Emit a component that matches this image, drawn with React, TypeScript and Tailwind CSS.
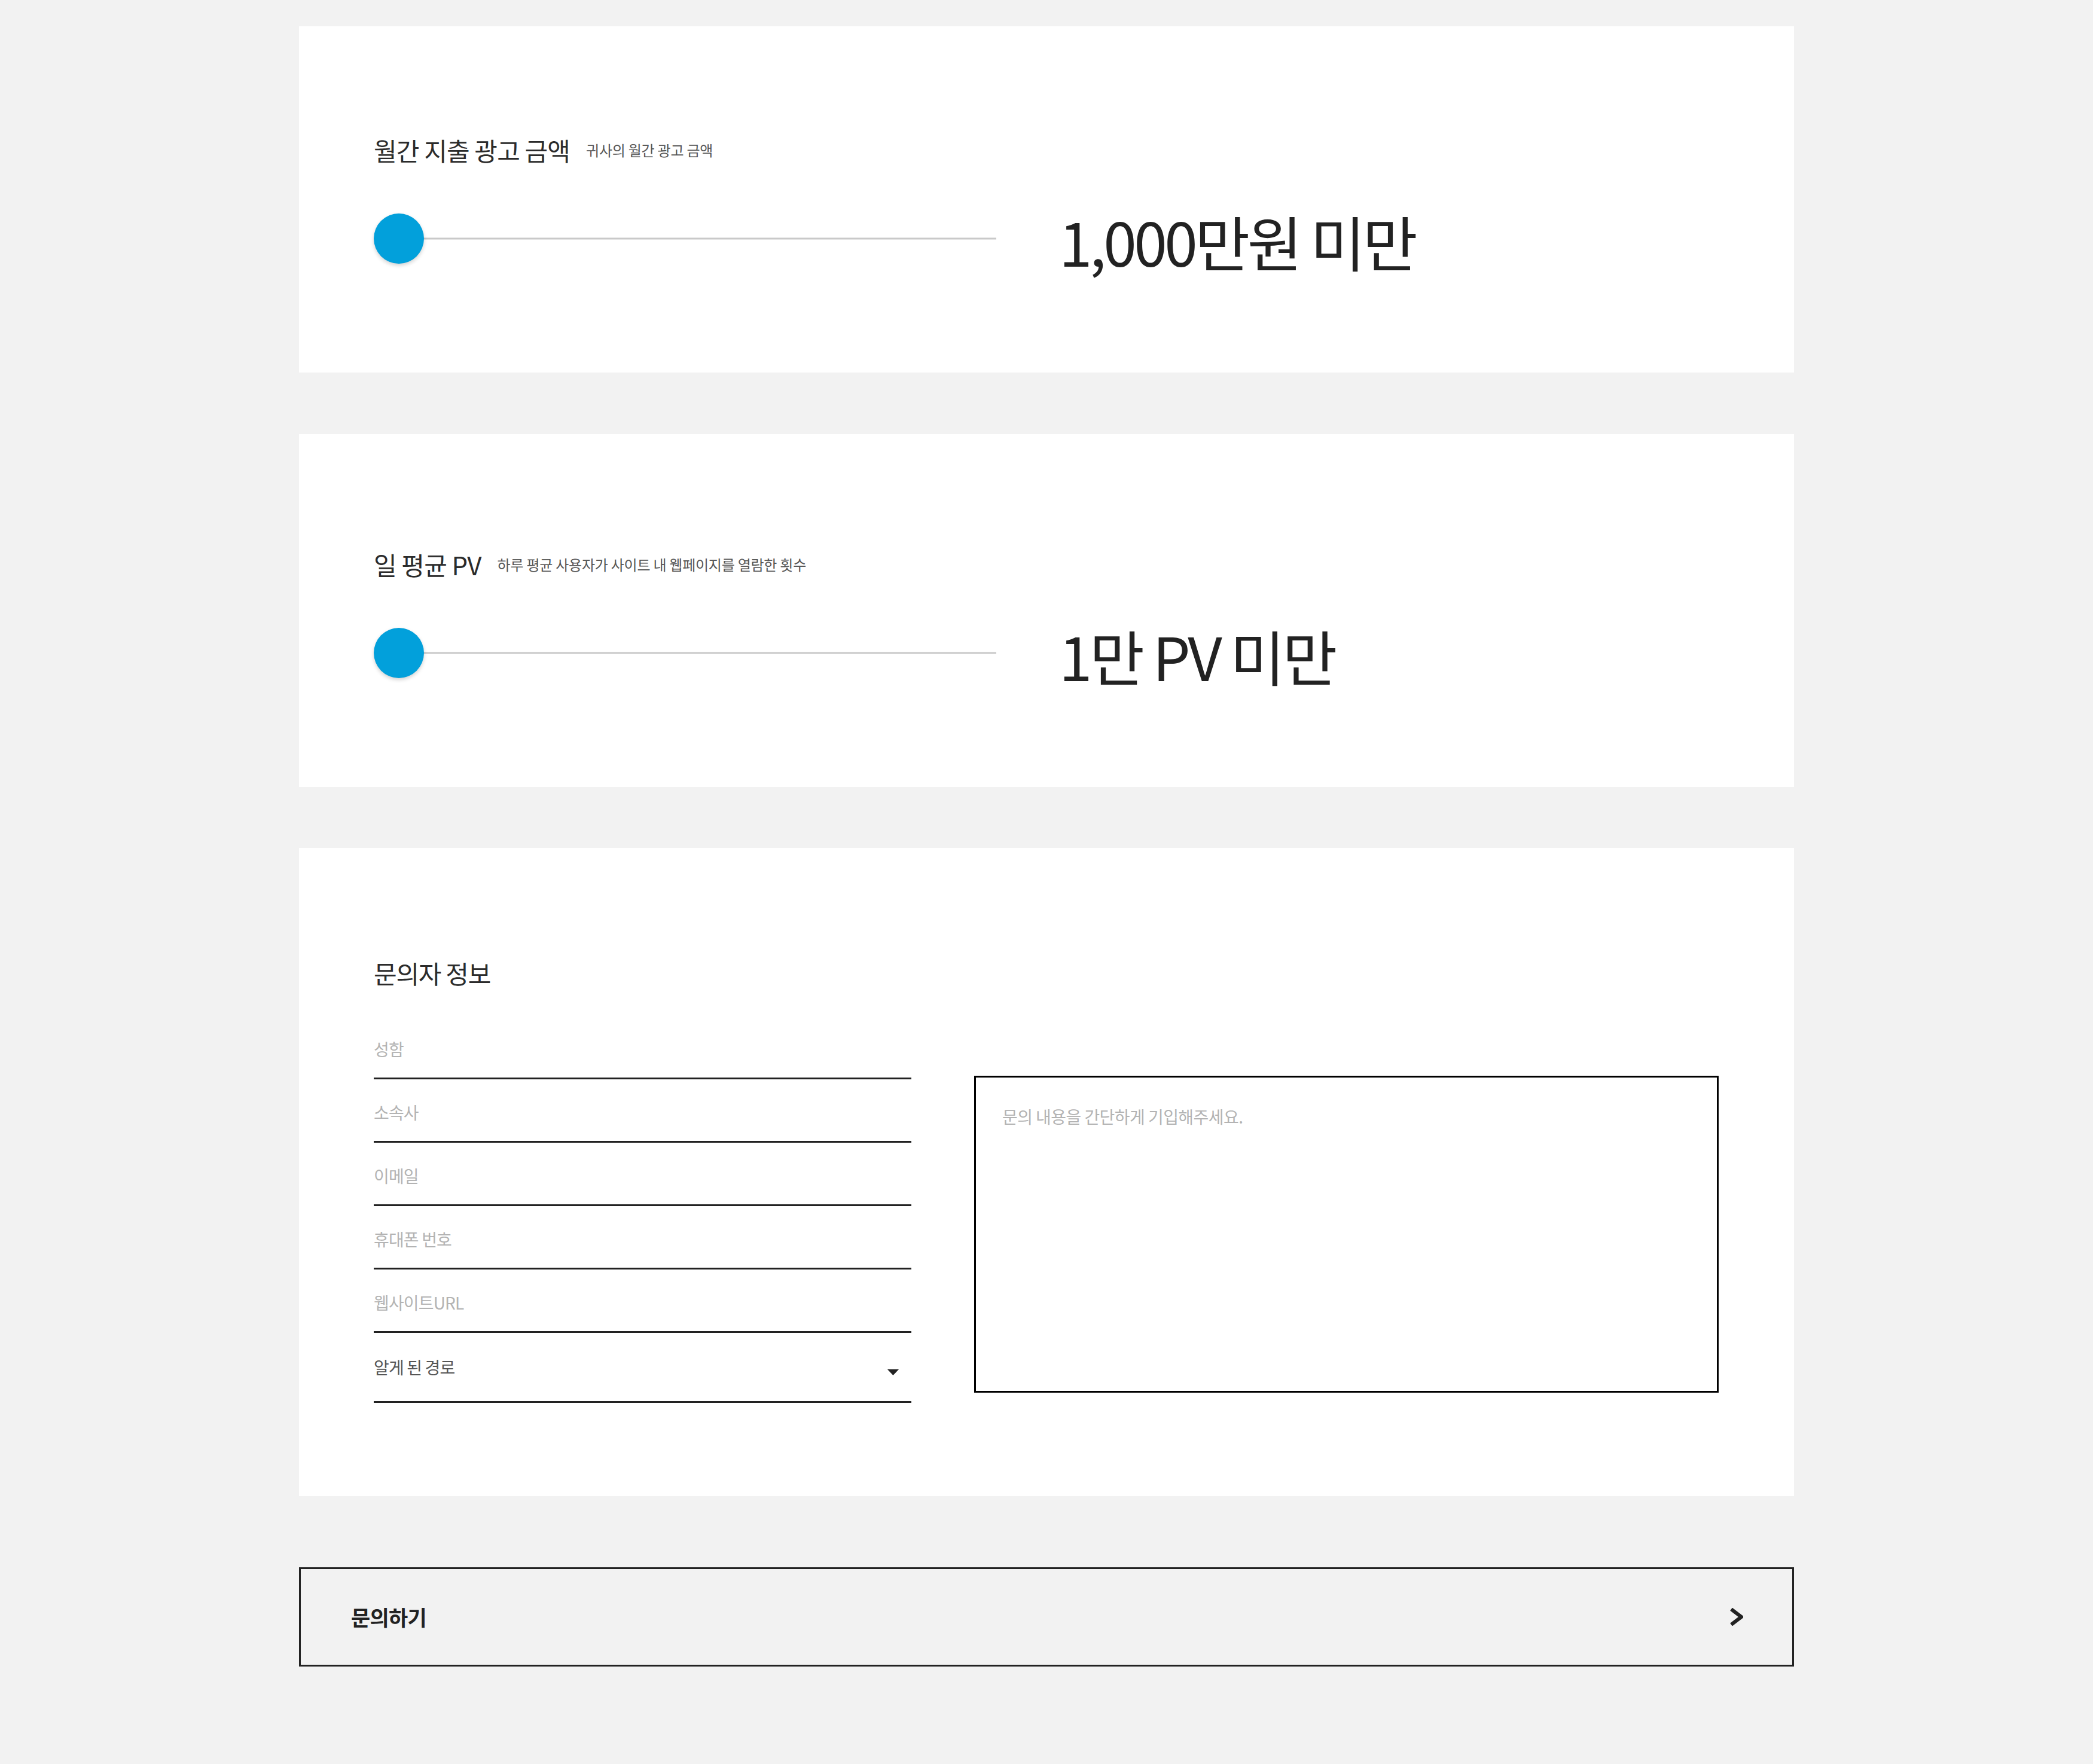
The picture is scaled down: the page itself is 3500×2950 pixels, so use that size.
import React, { useState } from 'react';

interface RangeCardProps {
  title: string;
  hint: string;
  value: string;
  topPad: string;
}

const RangeCard: React.FC<RangeCardProps> = ({ title, hint, value, topPad }) => {
  return (
    <section className={`bg-white pl-[125px] pb-[170px] ${topPad}`}>
      <div className="flex items-center gap-[27px]">
        <h3 className="text-[42px] leading-[42px] font-normal text-[#2b2b2b] tracking-[-0.02em]">{title}</h3>
        <span className="text-[24px] leading-[24px] text-[#555] tracking-[-0.01em]">{hint}</span>
      </div>

      <div className="mt-[73px] flex items-center">
        {/* slider */}
        <div className="relative w-[1041px] h-[84px] flex items-center">
          <div className="absolute left-0 right-0 top-1/2 -translate-y-1/2 h-[3px] bg-[#c9c9c9]"></div>
          <div className="relative w-[84px] h-[84px] rounded-full bg-[#02a0db] shadow-[0_3px_6px_rgba(0,0,0,0.18)]"></div>
        </div>
        <div className="ml-[105px] pt-[8px] text-[100px] leading-[100px] text-[#222] tracking-[-0.045em] whitespace-nowrap">
          {value}
        </div>
      </div>
    </section>
  );
};

const fields = ['성함', '소속사', '이메일', '휴대폰 번호', '웹사이트URL'];

export default function App() {
  const [message, setMessage] = useState('');

  return (
    <div className="min-h-[2950px] bg-[#f2f2f2] pt-[44px] pb-[162px] font-['Noto_Sans_CJK_KR','Noto_Sans',sans-serif]">
      <div className="w-[2500px] mx-auto">
        <RangeCard
          title="월간 지출 광고 금액"
          hint="귀사의 월간 광고 금액"
          value="1,000만원 미만"
          topPad="pt-[186px]"
        />

        <div className="mt-[103px]">
          <RangeCard
            title="일 평균 PV"
            hint="하루 평균 사용자가 사이트 내 웹페이지를 열람한 횟수"
            value="1만 PV 미만"
            topPad="pt-[197px]"
          />
        </div>

        {/* 문의자 정보 */}
        <section className="mt-[102px] bg-white pl-[125px] pt-[188px] pb-[156px]">
          <h3 className="text-[42px] leading-[42px] font-normal text-[#2b2b2b] tracking-[-0.03em]">문의자 정보</h3>

          <div className="mt-[51px] flex items-start gap-[105px]">
            <div className="w-[899px] flex flex-col">
              {fields.map((f) => (
                <input
                  key={f}
                  type="text"
                  placeholder={f}
                  className="h-[106px] pt-[6px] border-b-[3px] border-[#222] bg-transparent outline-none text-[28px] text-[#333] tracking-[-0.03em] placeholder:text-[#b3b3b3]"
                />
              ))}
              <div className="h-[117px] border-b-[3px] border-[#222] flex items-center justify-between pr-[21px]">
                <span className="text-[28px] text-[#555] tracking-[-0.03em]">알게 된 경로</span>
                <svg width="19" height="10" viewBox="0 0 19 10" className="mt-[18px]">
                  <polygon points="0,0 19,0 9.5,10" fill="#222" />
                </svg>
              </div>
            </div>

            <textarea
              value={message}
              onChange={(e) => setMessage(e.target.value)}
              placeholder="문의 내용을 간단하게 기입해주세요."
              className="mt-[100px] w-[1245px] h-[530px] border-[3px] border-black pl-[44px] pt-[45px] pr-[44px] text-[28px] leading-[40px] text-[#333] tracking-[-0.02em] outline-none resize-none placeholder:text-[#b3b3b3]"
            />
          </div>
        </section>

        <button className="mt-[119px] w-full h-[166px] border-[3px] border-[#222] bg-transparent flex items-center justify-between pl-[84px] pr-[82px]">
          <span className="text-[35px] font-bold text-[#222] tracking-[-0.02em]">문의하기</span>
          <svg width="22" height="30" viewBox="0 0 22 30">
            <polyline points="2,2 19,15 2,28" fill="none" stroke="#222" strokeWidth="6" strokeLinejoin="miter" />
          </svg>
        </button>
      </div>
    </div>
  );
}
